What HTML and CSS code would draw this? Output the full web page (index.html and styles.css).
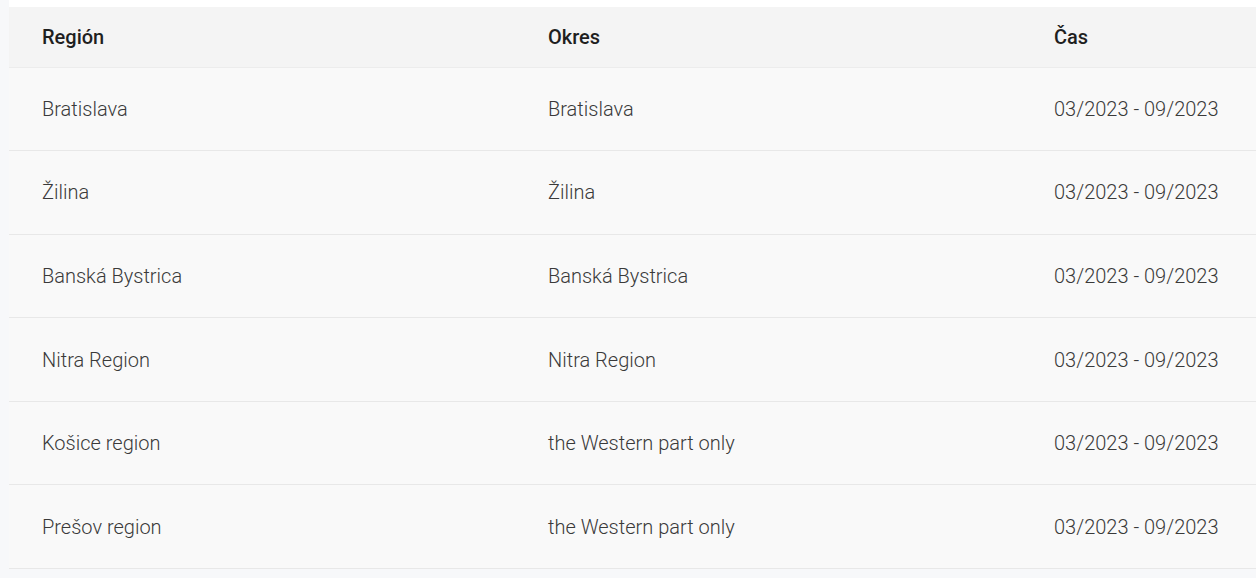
FILE: index.html
```html
<!DOCTYPE html>
<html lang="sk">
<head>
    <meta charset="UTF-8">
    <meta name="viewport" content="width=device-width, initial-scale=1.0">
    <title>Regióny</title>
    <link rel="stylesheet" href="styles.css">
</head>
<body>

    <div class="table-wrap">
        <table class="region-table">
            <thead>
                <tr>
                    <th class="col-wide">Región</th>
                    <th class="col-wide">Okres</th>
                    <th>Čas</th>
                </tr>
            </thead>
            <tbody>
                <tr>
                    <td>Bratislava</td>
                    <td>Bratislava</td>
                    <td>03/2023 - 09/2023</td>
                </tr>
                <tr>
                    <td>Žilina</td>
                    <td>Žilina</td>
                    <td>03/2023 - 09/2023</td>
                </tr>
                <tr>
                    <td>Banská Bystrica</td>
                    <td>Banská Bystrica</td>
                    <td>03/2023 - 09/2023</td>
                </tr>
                <tr>
                    <td>Nitra Region</td>
                    <td>Nitra Region</td>
                    <td>03/2023 - 09/2023</td>
                </tr>
                <tr>
                    <td>Košice region</td>
                    <td>the Western part only</td>
                    <td>03/2023 - 09/2023</td>
                </tr>
                <tr>
                    <td>Prešov region</td>
                    <td>the Western part only</td>
                    <td>03/2023 - 09/2023</td>
                </tr>
            </tbody>
        </table>
    </div>

</body>
</html>
```

FILE: styles.css
```css
body, html {
    margin: 0;
    padding: 0;
    font-family: Roboto, 'Liberation Sans', sans-serif;
    background-color: #f7f8fa;
    overflow: hidden;
}

.table-wrap {
    margin-left: 9px;
    padding-top: 7px;
    background-color: #ffffff;
}

.region-table {
    border-collapse: collapse;
    table-layout: fixed;
    width: 100%;
}

.region-table th,
.region-table td {
    box-sizing: border-box;
    text-align: left;
    white-space: nowrap;
    padding: 0 0 0 33px;
    font-size: 20px;
}

.region-table .col-wide {
    width: 506px;
}

.region-table th {
    height: 60px;
    background-color: #f4f4f4;
    color: #1f1f1f;
    font-weight: 500;
    border-bottom: 1px solid #ececec;
}

.region-table td {
    height: 83.6px;
    background-color: #f9f9f9;
    color: #3a3a3a;
    font-weight: 300;
    border-bottom: 1px solid #e8e8e8;
}
```
